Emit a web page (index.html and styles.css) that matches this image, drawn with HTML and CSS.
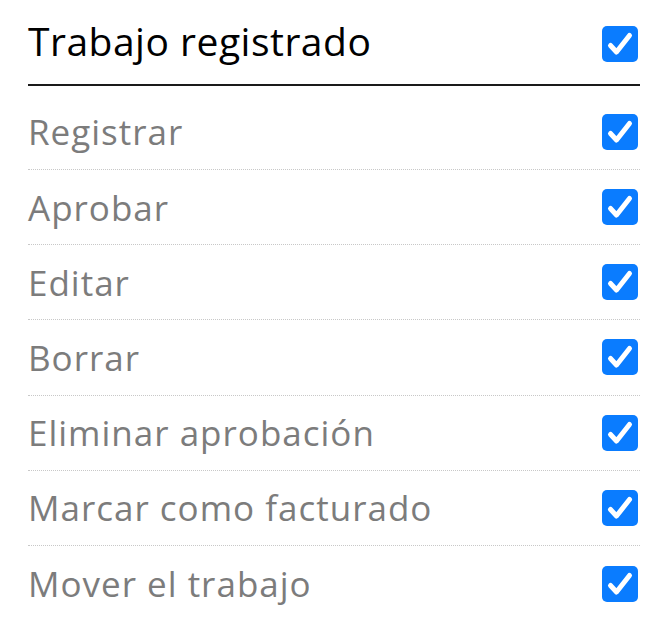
FILE: index.html
```html
<!DOCTYPE html>
<html lang="es">
<head>
<meta charset="utf-8">
<link rel="stylesheet" href="styles.css">
</head>
<body>
<div class="panel">
  <div class="header">
    <span class="title">Trabajo registrado</span>
    <span class="cb"><svg viewBox="0 0 36 36" width="36" height="36"><rect width="36" height="36" rx="5" fill="#0a7cff"/><path d="M8.5 19.5 L14.5 26 L27.5 9.5" fill="none" stroke="#fff" stroke-width="5" stroke-linecap="round" stroke-linejoin="round"/></svg></span>
  </div>
  <ul class="list">
    <li class="row"><span class="label">Registrar</span><span class="cb"><svg viewBox="0 0 36 36" width="36" height="36"><rect width="36" height="36" rx="5" fill="#0a7cff"/><path d="M8.5 19.5 L14.5 26 L27.5 9.5" fill="none" stroke="#fff" stroke-width="5" stroke-linecap="round" stroke-linejoin="round"/></svg></span></li>
    <li class="row"><span class="label">Aprobar</span><span class="cb"><svg viewBox="0 0 36 36" width="36" height="36"><rect width="36" height="36" rx="5" fill="#0a7cff"/><path d="M8.5 19.5 L14.5 26 L27.5 9.5" fill="none" stroke="#fff" stroke-width="5" stroke-linecap="round" stroke-linejoin="round"/></svg></span></li>
    <li class="row"><span class="label">Editar</span><span class="cb"><svg viewBox="0 0 36 36" width="36" height="36"><rect width="36" height="36" rx="5" fill="#0a7cff"/><path d="M8.5 19.5 L14.5 26 L27.5 9.5" fill="none" stroke="#fff" stroke-width="5" stroke-linecap="round" stroke-linejoin="round"/></svg></span></li>
    <li class="row"><span class="label">Borrar</span><span class="cb"><svg viewBox="0 0 36 36" width="36" height="36"><rect width="36" height="36" rx="5" fill="#0a7cff"/><path d="M8.5 19.5 L14.5 26 L27.5 9.5" fill="none" stroke="#fff" stroke-width="5" stroke-linecap="round" stroke-linejoin="round"/></svg></span></li>
    <li class="row"><span class="label">Eliminar aprobación</span><span class="cb"><svg viewBox="0 0 36 36" width="36" height="36"><rect width="36" height="36" rx="5" fill="#0a7cff"/><path d="M8.5 19.5 L14.5 26 L27.5 9.5" fill="none" stroke="#fff" stroke-width="5" stroke-linecap="round" stroke-linejoin="round"/></svg></span></li>
    <li class="row"><span class="label">Marcar como facturado</span><span class="cb"><svg viewBox="0 0 36 36" width="36" height="36"><rect width="36" height="36" rx="5" fill="#0a7cff"/><path d="M8.5 19.5 L14.5 26 L27.5 9.5" fill="none" stroke="#fff" stroke-width="5" stroke-linecap="round" stroke-linejoin="round"/></svg></span></li>
    <li class="row"><span class="label">Mover el trabajo</span><span class="cb"><svg viewBox="0 0 36 36" width="36" height="36"><rect width="36" height="36" rx="5" fill="#0a7cff"/><path d="M8.5 19.5 L14.5 26 L27.5 9.5" fill="none" stroke="#fff" stroke-width="5" stroke-linecap="round" stroke-linejoin="round"/></svg></span></li>
  </ul>
</div>
</body>
</html>
```
FILE: styles.css
```css
html, body {
  margin: 0;
  padding: 0;
  background: #fff;
}
body {
  font-family: "Open Sans", "Noto Sans", sans-serif;
}
.panel {
  padding: 0 22px 0 28px;
}
.header {
  display: flex;
  align-items: center;
  justify-content: space-between;
  height: 86px;
  padding-top: 4px;
  box-sizing: border-box;
  border-bottom: 2px solid #1a1a1a;
}
.title {
  font-size: 39px;
  letter-spacing: 0.5px;
  color: #000;
  line-height: 1;
  margin-bottom: 7px;
}
.cb {
  display: flex;
  width: 36px;
  height: 36px;
  margin-right: 2px;
}
.list {
  list-style: none;
  margin: 0;
  padding: 8.8px 0 0 0;
}
.row {
  display: flex;
  align-items: center;
  justify-content: space-between;
  height: 75.2px;
  box-sizing: border-box;
  border-bottom: 1px dotted #c8c8c8;
}
.row:last-child {
  border-bottom: none;
}
.label {
  font-size: 35px;
  letter-spacing: 1px;
  color: #7c7c7c;
  line-height: 1;
}
```
